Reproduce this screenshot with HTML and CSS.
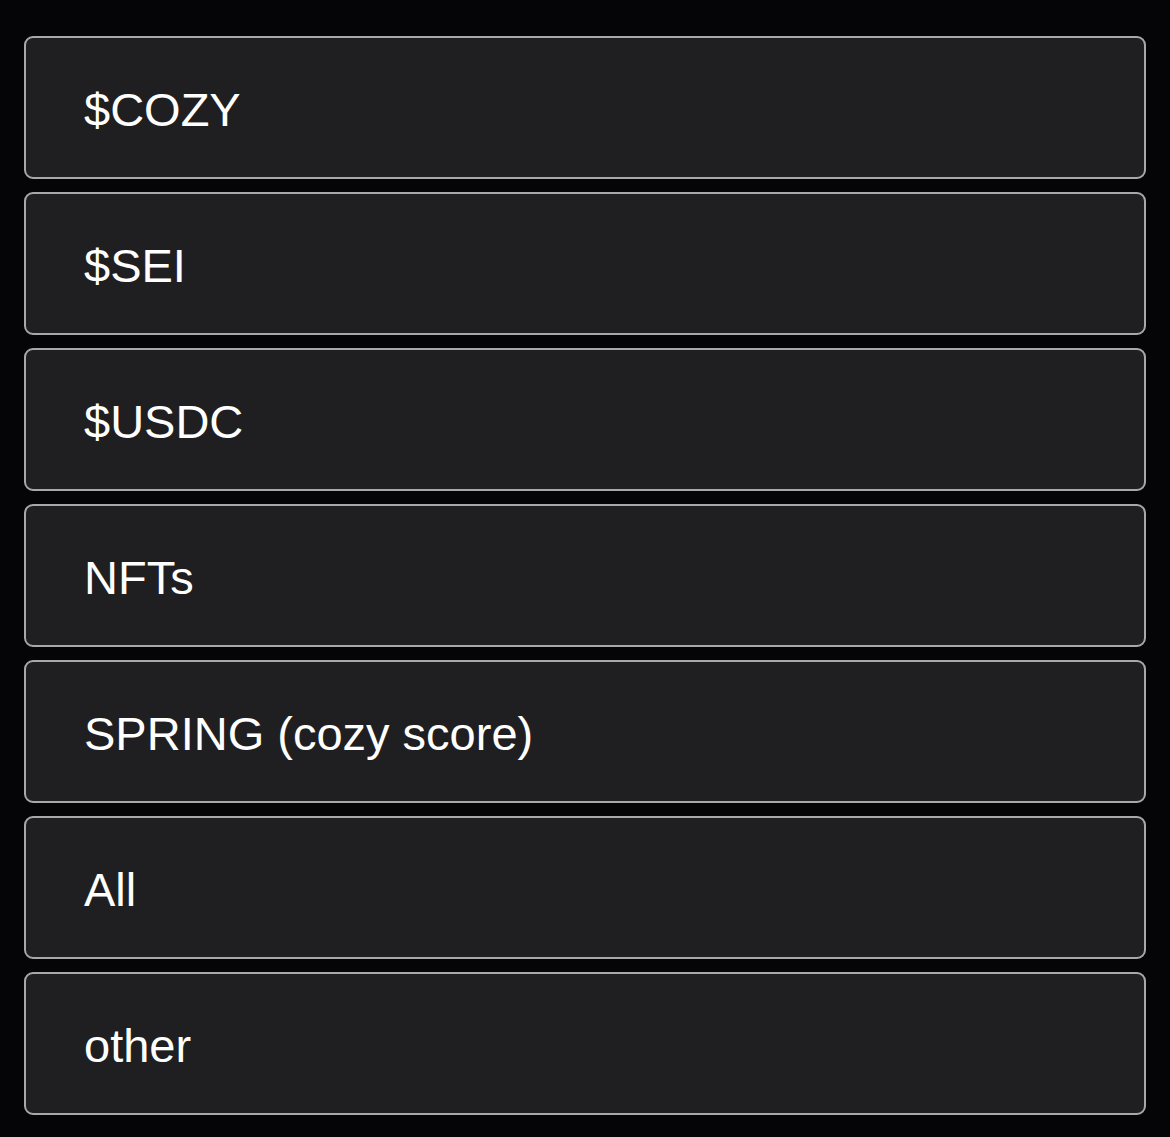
FILE: index.html
```html
<!DOCTYPE html>
<html lang="en">
<head>
    <meta charset="UTF-8">
    <title>Options</title>
    <link rel="stylesheet" href="styles.css">
</head>
<body>

<div class="option-list">
    <div class="option">$COZY</div>
    <div class="option">$SEI</div>
    <div class="option">$USDC</div>
    <div class="option">NFTs</div>
    <div class="option">SPRING (cozy score)</div>
    <div class="option">All</div>
    <div class="option">other</div>
</div>

</body>
</html>
```

FILE: styles.css
```css
body {
    margin: 0;
    background-color: #050507;
    font-family: "Liberation Sans", Arial, sans-serif;
}

/* list of choices */
.option-list {
    display: flex;
    flex-direction: column;
    gap: 13px;
    padding: 36px 24px 21px 24px;
}

.option {
    box-sizing: border-box;
    height: 143px;
    display: flex;
    align-items: center;
    padding: 4px 0 0 58px;
    background-color: #1f1f21;
    border: 2px solid #a8a8aa;
    border-radius: 9px;
    color: #fff;
    font-size: 47px;
}
```
